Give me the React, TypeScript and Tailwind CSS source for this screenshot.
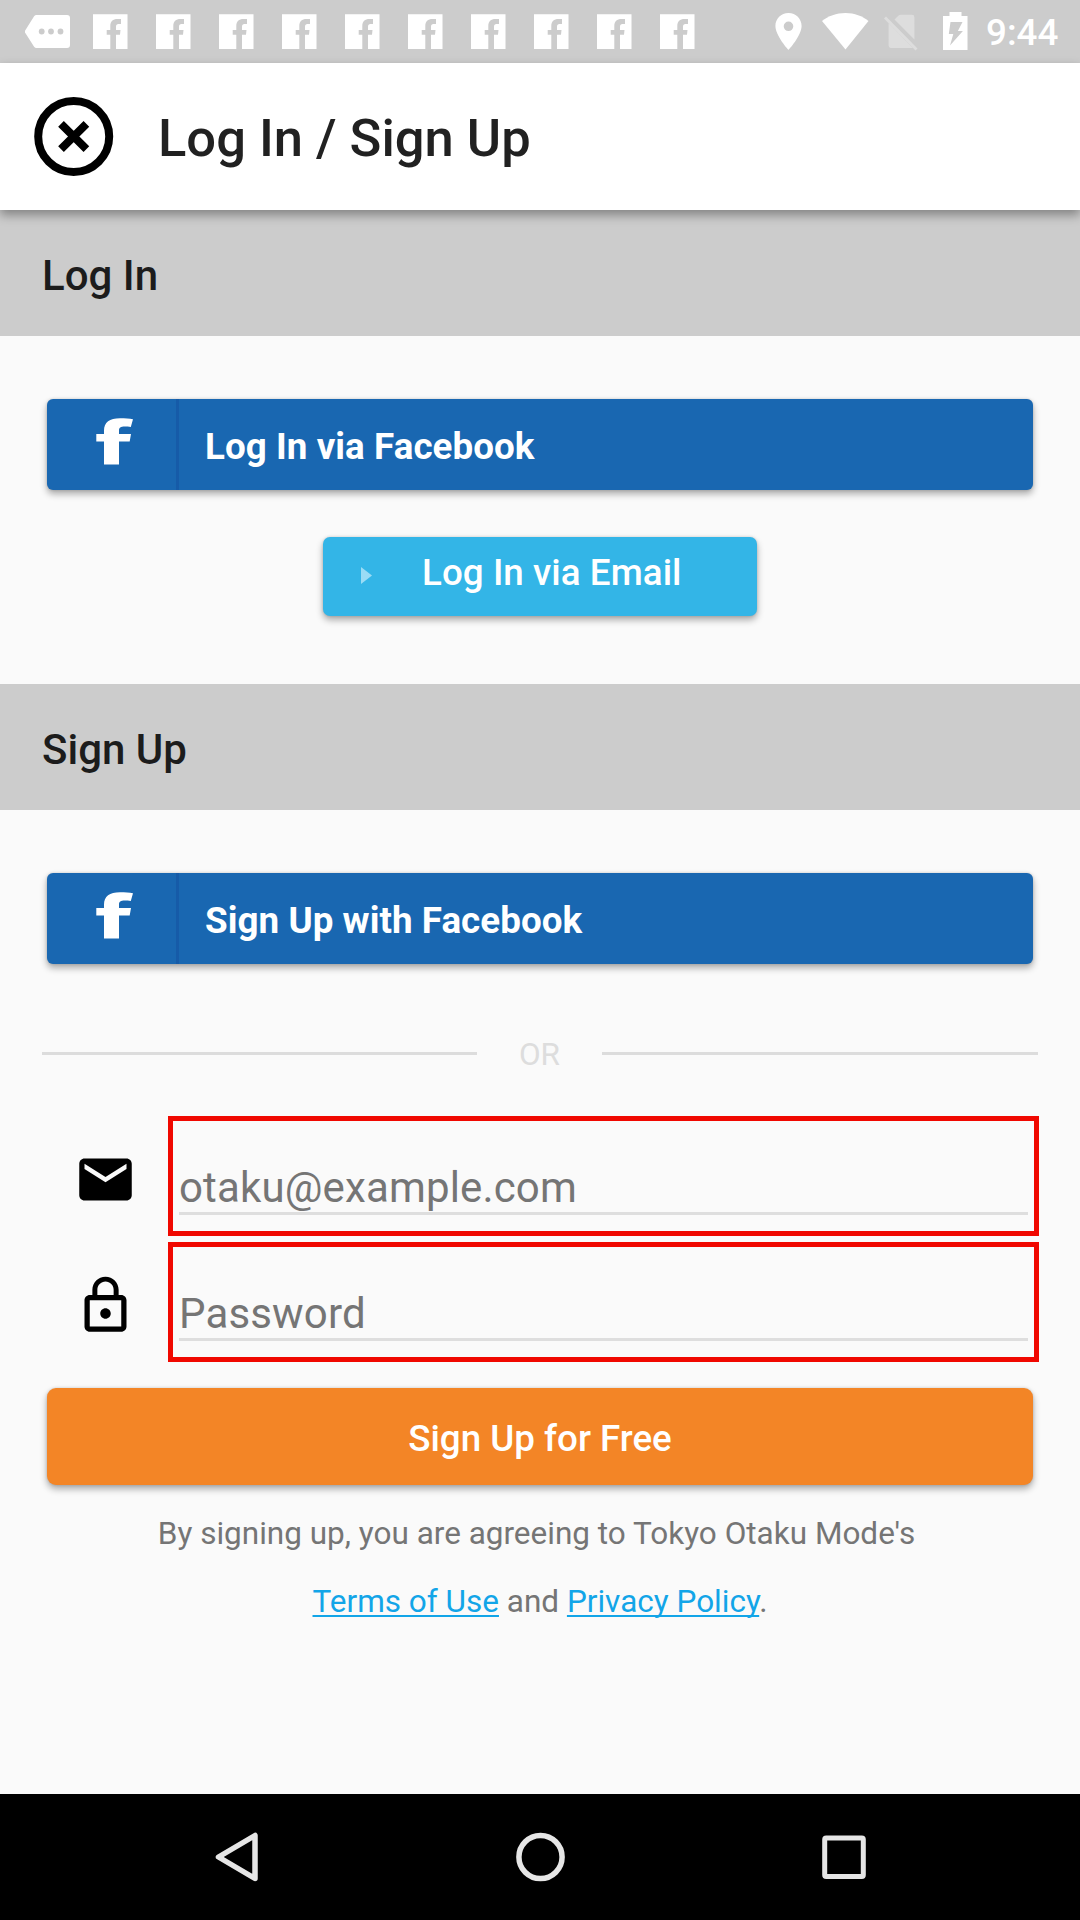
import React from "react";

function FacebookBadge() {
  return (
    <svg className="h-[35px] w-[35px]" viewBox="0 0 35 35">
      <path fill="#fff" d="M0 .3h34.500v34.700H23V20.800h4l.5-4.800H23v-3.200c0-1.800.8-2.700 2.500-2.700H28V5h-3.500c-4.600 0-7.200 2.500-7.200 6.800V16h-3.600v4.800h3.600V35H0z" />
    </svg>
  );
}

function StatusBar() {
  return (
    <div className="flex h-[63px] shrink-0 items-start bg-[#cccccc] pl-[25px] text-white">
      <svg className="mt-[14px] h-[35px] w-[46px]" viewBox="0 0 46 35">
        <path fill="#fff" d="M11.500 1H42a3 3 0 0 1 3 3v27a3 3 0 0 1-3 3H11.500a3 3 0 0 1-2.400-1.200L.5 19.200a2.500 2.500 0 0 1 0-3.200L9.100 2.200A3 3 0 0 1 11.500 1z" />
        <circle cx="16.700" cy="17.500" r="2.900" fill="#ccc" />
        <circle cx="26" cy="17.500" r="2.900" fill="#ccc" />
        <circle cx="35.500" cy="17.500" r="2.900" fill="#ccc" />
      </svg>
      <div className="mt-[14px] ml-[22px] flex gap-7">
        {Array.from({ length: 10 }, (_, i) => (
          <FacebookBadge key={i} />
        ))}
      </div>
      <svg className="mt-[13px] ml-[80px] h-[37px] w-[27px]" viewBox="0 0 27 37">
        <path fill="#fff" fillRule="evenodd" d="M13.500 0C6 0 .4 5.800.4 13c0 9.700 13.100 24 13.100 24s13.100-14.300 13.100-24C26.600 5.800 21 0 13.500 0zm0 8.500a4.800 4.800 0 1 1 0 9.600 4.800 4.800 0 0 1 0-9.600z" />
      </svg>
      <svg className="mt-[13px] ml-[20px] h-[37px] w-[47px]" viewBox="0 0 47 37">
        <path fill="#fff" d="M23.500 36.500 0 8C6 3 14.500 0 23.500 0S40.500 3 46.500 8z" />
      </svg>
      <svg className="mt-[14px] ml-[15px] h-[37px] w-[34px]" viewBox="0 0 34 37">
        <path fill="#fff" fillOpacity=".34" d="M10.500 5.500 14.300 1.700Q15.300.8 16.600.8H28q2.400 0 2.400 2.400v22.400zM4.600 9.300 28.800 34H6.900q-2.300 0-2.300-2.400z" />
        <path stroke="#fff" strokeOpacity=".34" strokeWidth="2.800" d="m1 3.500 31.500 32" />
      </svg>
      <svg className="mt-[12px] ml-[24px] h-[38px] w-[26px]" viewBox="0 0 26 38">
        <path fill="#fff" d="M7.500 0h12v4H25.500v34H1V4h6.500z" />
        <path fill="#ccc" d="M8.500 10h12l-4.600 9h5L8 33.500 11.300 22H6.800z" />
      </svg>
      <span className="ml-[18px] text-[36.75px] leading-[66px] font-medium">9:44</span>
    </div>
  );
}

function SectionHeading({ children }: { children: React.ReactNode }) {
  return (
    <h2 className="flex h-[126px] shrink-0 items-center bg-[#cccccc] pt-[6px] pl-[42px] text-[42px] leading-none font-medium text-[#1c1c1c]">
      {children}
    </h2>
  );
}

function FacebookButton({ children }: { children: React.ReactNode }) {
  return (
    <button className="mx-[47px] mt-[63px] flex h-[91px] shrink-0 rounded-[6px] bg-[#1967b1] text-white shadow-[0_4px_7px_rgba(0,0,0,0.32),0_0_3px_rgba(0,0,0,0.15)]">
      <span className="flex h-full w-[132px] border-r-[3px] border-[#165ba8] pt-[19px] pl-[49px]">
        <svg className="h-[47px] w-[37px]" viewBox="0 0 37 47">
          <path fill="#fff" d="M8 46.500V23.500H0.300V16H8v-3.500C8 4.500 13.500.3 24 .3c5 0 9.500.2 13 1L34.800 9c-2-.4-4-.5-6-.5-4.300 0-5.800 1.300-5.800 4V16h12l-1.300 7.500H23v23z" />
        </svg>
      </span>
      <span className="flex h-full items-center pt-[5px] pl-[26px] text-[36.75px] leading-none font-bold tracking-[0.06px]">{children}</span>
    </button>
  );
}

function Field({ icon, children }: { icon: React.ReactNode; children: React.ReactNode }) {
  return (
    <div className="flex h-[120px] shrink-0 pr-[41px] pl-[73.5px]">
      <div className="w-[94.5px] pt-[31.5px]">{icon}</div>
      <div className="flex-1 border-[5px] border-[#f00800] pr-[6px] pl-[6px]">
        <div className="h-[94px] border-b-[3px] border-[#dedede] pt-[46px] text-[42px] leading-[42px] tracking-[0.15px] text-[#757575]">{children}</div>
      </div>
    </div>
  );
}

export default function App() {
  return (
    <div className="flex h-[1920px] w-[1080px] flex-col overflow-hidden bg-[#fafafa] font-['Roboto',sans-serif]">
      <StatusBar />
      <header className="relative z-10 flex h-[147px] shrink-0 items-center bg-white pl-[34px] shadow-[0_5px_10px_rgba(0,0,0,0.36)]">
        <svg className="h-[80px] w-[80px]" viewBox="0 0 80 80" fill="none" stroke="#000">
          <circle cx="39.700" cy="39.500" r="35.500" strokeWidth="8" />
          <path strokeWidth="8" d="m27 26.800 25.400 25.400m0-25.400L27 52.200" />
        </svg>
        <h1 className="pt-[3px] pl-[44px] text-[52.5px] leading-none font-medium text-[#212121]">Log In / Sign Up</h1>
      </header>

      <SectionHeading>Log In</SectionHeading>
      <FacebookButton>Log In via Facebook</FacebookButton>
      <button className="mt-[47px] mb-[68px] flex h-[79px] w-[434px] shrink-0 items-center self-center rounded-[7px] bg-[#33b5e7] pl-[38px] text-white shadow-[0_4px_7px_rgba(0,0,0,0.32),0_0_3px_rgba(0,0,0,0.15)]">
        <svg className="-mt-[3px] h-[17px] w-[11px]" viewBox="0 0 11 17">
          <path fill="#9bdcf5" d="M0 0v17l11-8.500z" />
        </svg>
        <span className="pb-[6px] pl-[50px] text-[36.75px] leading-none font-medium tracking-[0.06px]">Log In via Email</span>
      </button>

      <SectionHeading>Sign Up</SectionHeading>
      <FacebookButton>Sign Up with Facebook</FacebookButton>
      <div className="mt-[68px] flex h-[42px] shrink-0 items-center px-[42px]">
        <div className="h-[3px] w-[435px] bg-[#dcdcdc]" />
        <span className="w-[125px] pt-[3px] text-center text-[31.5px] leading-none text-[#dddddd]">OR</span>
        <div className="h-[3px] flex-1 bg-[#dcdcdc]" />
      </div>

      <div className="mt-[42px] flex shrink-0 flex-col gap-[6px]">
        <Field
          icon={
            <svg className="h-[63px] w-[63px]" viewBox="0 0 24 24">
              <path d="M20 4H4c-1.100 0-1.990.9-1.990 2L2 18c0 1.100.9 2 2 2h16c1.100 0 2-.9 2-2V6c0-1.100-.9-2-2-2zm0 4l-8 5-8-5V6l8 5 8-5v2z" />
            </svg>
          }
        >
          otaku@example.com
        </Field>
        <Field
          icon={
            <svg className="h-[63px] w-[63px]" viewBox="0 0 24 24">
              <path d="M12 17c1.100 0 2-.9 2-2s-.9-2-2-2-2 .9-2 2 .9 2 2 2zm6-9h-1V6c0-2.760-2.240-5-5-5S7 3.240 7 6v2H6c-1.100 0-2 .9-2 2v10c0 1.100.9 2 2 2h12c1.100 0 2-.9 2-2V10c0-1.100-.9-2-2-2zM8.900 6c0-1.710 1.390-3.100 3.100-3.100s3.100 1.390 3.100 3.100v2H8.900V6zM18 20H6V10h12v10z" />
            </svg>
          }
        >
          Password
        </Field>
      </div>

      <button className="mx-[47px] mt-[26px] flex h-[97px] shrink-0 items-center justify-center rounded-[9px] bg-[#f38526] pt-[5px] text-[36.75px] leading-none font-medium text-white shadow-[0_4px_7px_rgba(0,0,0,0.32),0_0_3px_rgba(0,0,0,0.15)]">
        Sign Up for Free
      </button>
      <div className="mt-[15px] shrink-0 text-center text-[31.5px] leading-[68px] text-[#757575]">
        <p className="pr-[7px]">By signing up, you are agreeing to Tokyo Otaku Mode's</p>
        <p>
          <a className="text-[#12a5e8] underline decoration-2 underline-offset-[3px] [text-decoration-skip-ink:none]">Terms of Use</a> and{" "}
          <a className="text-[#12a5e8] underline decoration-2 underline-offset-[3px] [text-decoration-skip-ink:none]">Privacy Policy</a>.
        </p>
      </div>

      <nav className="mt-auto flex h-[126px] shrink-0 items-center bg-black pl-[215px]">
        <svg className="h-[50px] w-[44px]" viewBox="0 0 44 50" fill="none" stroke="#e6e6e6" strokeWidth="5.500" strokeLinejoin="round">
          <path d="M40 3.500v43L3.500 25z" />
        </svg>
        <svg className="ml-[256px] h-[50px] w-[50px]" viewBox="0 0 50 50" fill="none" stroke="#e6e6e6" strokeWidth="5.500">
          <circle cx="25.500" cy="25" r="21.600" />
        </svg>
        <svg className="ml-[257px] h-[44px] w-[44px]" viewBox="0 0 44 44" fill="none" stroke="#e6e6e6" strokeWidth="5">
          <rect x="2.700" y="2.900" width="38.600" height="38.600" rx="1.500" />
        </svg>
      </nav>
    </div>
  );
}
